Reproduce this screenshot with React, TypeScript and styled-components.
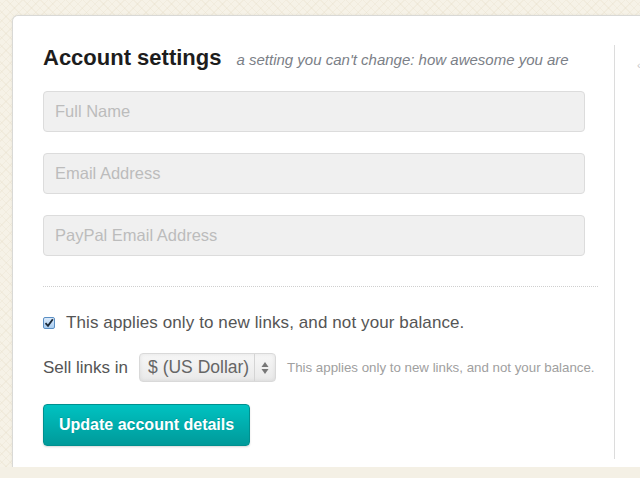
import styled, { createGlobalStyle } from "styled-components";

const GlobalStyle = createGlobalStyle`
  html, body {
    margin: 0;
    padding: 0;
    height: 478px;
    overflow: hidden;
  }
  body {
    font-family: "Liberation Sans", Arial, sans-serif;
    background-color: #f6f2e7;
    background-image:
      repeating-linear-gradient(45deg, rgba(220, 208, 180, 0.18) 0 1px, transparent 1px 6px),
      repeating-linear-gradient(-45deg, rgba(220, 208, 180, 0.18) 0 1px, transparent 1px 6px);
  }
`;

const Page = styled.div`
  display: flex;
  flex-direction: column;
  height: 478px;
`;

const Stage = styled.div`
  padding: 15px 0 0 12px;
`;

const Card = styled.div`
  display: flex;
  align-items: flex-start;
  width: 720px;
  height: 451px;
  background: #fff;
  border: 1px solid #d9d9d6;
  border-bottom: none;
  border-radius: 6px 0 0 0;
  box-shadow: 0 0 3px rgba(0, 0, 0, 0.06);
`;

const Main = styled.div`
  width: 555px;
  padding: 30px 0 0 30px;
`;

const Sidebar = styled.div`
  margin: 29px 0 0 16px;
  height: 400px;
  border-left: 1px solid #dcdcdc;
  padding: 14px 0 0 22px;
  color: #c8c8c8;
  font-size: 11px;
`;

const Footer = styled.div`
  flex: 1;
  background: #f4f0e5;
`;

const TitleRow = styled.div`
  display: flex;
  align-items: baseline;
  gap: 15px;
  margin-bottom: 21px;
`;

const Title = styled.h2`
  margin: 0;
  font-size: 22px;
  line-height: 24px;
  font-weight: bold;
  color: #1d1d1d;
`;

const Subtitle = styled.span`
  font-size: 15px;
  font-style: italic;
  color: #7b8087;
`;

const Fields = styled.div`
  display: flex;
  flex-direction: column;
  gap: 21px;
  width: 542px;
`;

const Field = styled.input`
  box-sizing: border-box;
  width: 100%;
  height: 41px;
  padding: 0 11px;
  font-family: "Liberation Sans", Arial, sans-serif;
  font-size: 16.5px;
  color: #555;
  background: #f0f0f0;
  border: 1px solid #dcdcdc;
  border-radius: 4px;
  outline: none;
  &::placeholder {
    color: #bcbcbc;
  }
`;

const Rule = styled.hr`
  margin: 30px 0 0;
  border: none;
  border-top: 1px dotted #cfcfcf;
`;

const CheckRow = styled.label`
  display: flex;
  align-items: center;
  gap: 11px;
  margin-top: 26px;
  font-size: 17px;
  letter-spacing: 0.1px;
  color: #555;
`;

const CheckBox = styled.span`
  display: flex;
  align-items: center;
  justify-content: center;
  box-sizing: border-box;
  width: 12px;
  height: 12px;
  border: 1px solid #5b8fc4;
  border-radius: 2px;
  background: linear-gradient(#dbeafa, #a9cdf1);
`;

const SellRow = styled.div`
  display: flex;
  align-items: center;
  gap: 11px;
  margin-top: 20px;
`;

const Label = styled.span`
  font-size: 17px;
  color: #555;
`;

const Select = styled.div`
  display: flex;
  align-items: stretch;
  box-sizing: border-box;
  height: 29px;
  width: 137px;
  border: 1px solid #d9d9d9;
  border-radius: 4px;
  background: linear-gradient(#f7f7f7, #e9e9e9);
  box-shadow: inset 0 0 4px rgba(0, 0, 0, 0.08);
`;

const SelectValue = styled.span`
  flex: 1;
  display: flex;
  align-items: center;
  padding-left: 8px;
  font-size: 17.5px;
  color: #666;
  white-space: nowrap;
`;

const SelectArrows = styled.span`
  display: flex;
  align-items: center;
  justify-content: center;
  width: 20px;
  border-left: 1px solid #d4d4d4;
`;

const Help = styled.span`
  font-size: 13.3px;
  color: #a0a0a0;
  white-space: nowrap;
`;

const Button = styled.button`
  margin-top: 22px;
  height: 42px;
  padding: 0 15px;
  font-family: "Liberation Sans", Arial, sans-serif;
  font-size: 16px;
  font-weight: bold;
  color: #fff;
  background: linear-gradient(#00c2c1, #009a9a);
  border: 1px solid #00908f;
  border-radius: 4px;
  box-shadow: 0 1px 2px rgba(0, 0, 0, 0.15);
  text-shadow: 0 -1px 0 rgba(0, 0, 0, 0.15);
  cursor: pointer;
`;

const App = () => {
  return (
    <Page>
      <GlobalStyle />
      <Stage>
        <Card>
          <Main>
            <TitleRow>
              <Title>Account settings</Title>
              <Subtitle>a setting you can't change: how awesome you are</Subtitle>
            </TitleRow>

            <Fields>
              <Field placeholder="Full Name" />
              <Field placeholder="Email Address" />
              <Field placeholder="PayPal Email Address" />
            </Fields>

            <Rule />

            <CheckRow>
              <CheckBox>
                <svg width="10" height="10" viewBox="0 0 10 10">
                  <path d="M1.5 5.2 L4 7.8 L8.8 1.2" fill="none" stroke="#1b2a3a" strokeWidth="1.8" />
                </svg>
              </CheckBox>
              This applies only to new links, and not your balance.
            </CheckRow>

            <SellRow>
              <Label>Sell links in</Label>
              <Select>
                <SelectValue>$ (US Dollar)</SelectValue>
                <SelectArrows>
                  <svg width="8" height="14" viewBox="0 0 8 14">
                    <path d="M4 1 L7.5 6 L0.5 6 Z" fill="#777" />
                    <path d="M4 13 L7.5 8 L0.5 8 Z" fill="#777" />
                  </svg>
                </SelectArrows>
              </Select>
              <Help>This applies only to new links, and not your balance.</Help>
            </SellRow>

            <Button>Update account details</Button>
          </Main>
          <Sidebar>‹</Sidebar>
        </Card>
      </Stage>
      <Footer />
    </Page>
  );
};

export default App;
